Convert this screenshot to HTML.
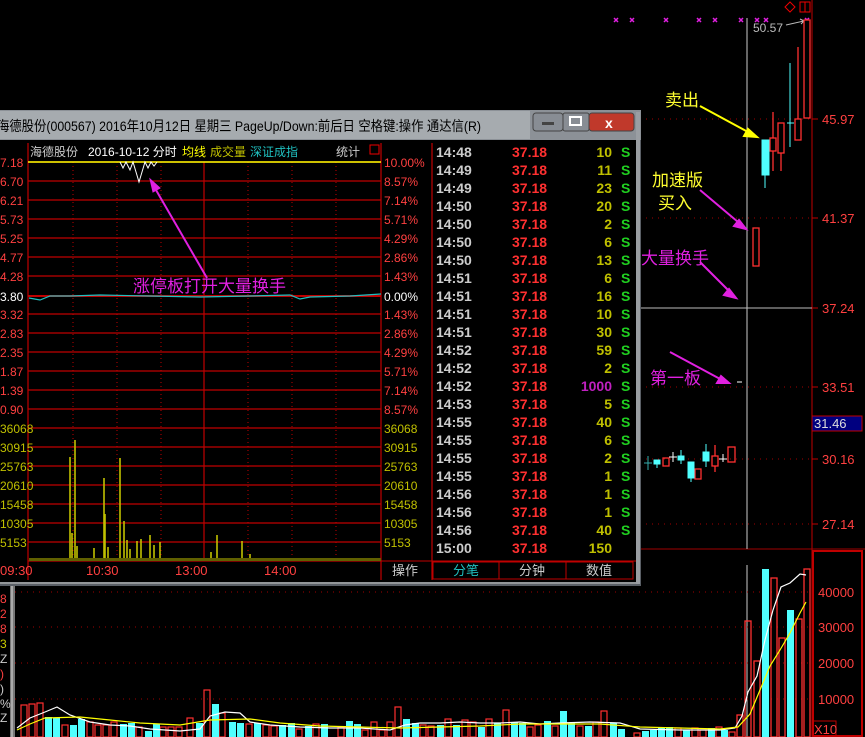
<!DOCTYPE html>
<html><head><meta charset="utf-8"><style>
html,body{margin:0;padding:0;background:#000;overflow:hidden}
svg{display:block}
text{font-family:"Liberation Sans","Noto Sans CJK SC",sans-serif}
</style></head><body>
<svg width="865" height="737" viewBox="0 0 865 737" xmlns="http://www.w3.org/2000/svg">
<rect width="865" height="737" fill="#000"/>
<line x1="812" y1="0" x2="812" y2="737" stroke="#c00000" stroke-width="1"/>
<line x1="0" y1="549" x2="865" y2="549" stroke="#a00000" stroke-width="1"/>
<line x1="747" y1="18" x2="747" y2="549" stroke="#ccc"/>
<line x1="747" y1="565" x2="747" y2="737" stroke="#ccc"/>
<g stroke="#a00000" stroke-dasharray="1,5">
<line x1="40" y1="119" x2="812" y2="119"/><line x1="40" y1="218" x2="812" y2="218"/>
<line x1="40" y1="387" x2="812" y2="387"/><line x1="40" y1="459" x2="812" y2="459"/>
<line x1="40" y1="524" x2="812" y2="524"/>
<line x1="15" y1="592" x2="812" y2="592"/><line x1="15" y1="627" x2="812" y2="627"/>
<line x1="15" y1="663" x2="812" y2="663"/><line x1="15" y1="699" x2="812" y2="699"/>
</g>
<line x1="640" y1="308" x2="812" y2="308" stroke="#bbb"/>
<g stroke="#c00000"><line x1="812" y1="119" x2="818" y2="119"/><line x1="812" y1="218" x2="818" y2="218"/><line x1="812" y1="308" x2="818" y2="308"/><line x1="812" y1="387" x2="818" y2="387"/><line x1="812" y1="459" x2="818" y2="459"/><line x1="812" y1="524" x2="818" y2="524"/></g>
<g fill="#ff4040" font-size="13">
<text x="822" y="124">45.97</text><text x="822" y="223">41.37</text><text x="822" y="313">37.24</text>
<text x="822" y="392">33.51</text><text x="822" y="464">30.16</text><text x="822" y="529">27.14</text>
<text x="818" y="597">40000</text><text x="818" y="632">30000</text><text x="818" y="668">20000</text><text x="818" y="704">10000</text>
</g>
<rect x="812" y="416" width="50" height="15" fill="#000080" stroke="#c00000"/>
<text x="814" y="428" fill="#ddd" font-size="13">31.46</text>
<rect x="813" y="551" width="49" height="185" fill="none" stroke="#c00000" stroke-width="2"/>
<rect x="813" y="721" width="23" height="16" fill="none" stroke="#c00000"/>
<text x="814" y="734" fill="#ff4040" font-size="13">X10</text>
<path d="M790 2 l5 5 -5 5 -5 -5z" fill="none" stroke="#e00"/><rect x="800" y="2" width="10" height="10" fill="none" stroke="#e00"/><line x1="805" y1="2" x2="805" y2="12" stroke="#e00"/>
<g stroke="#e020e0" stroke-width="1.5">
<path d="M614 18 l4 4 m0 -4 l-4 4"/><path d="M630 18 l4 4 m0 -4 l-4 4"/><path d="M664 18 l4 4 m0 -4 l-4 4"/><path d="M697 18 l4 4 m0 -4 l-4 4"/><path d="M713 18 l4 4 m0 -4 l-4 4"/><path d="M739 18 l4 4 m0 -4 l-4 4"/><path d="M755 18 l4 4 m0 -4 l-4 4"/><path d="M764 18 l4 4 m0 -4 l-4 4"/><path d="M805 18 l4 4 m0 -4 l-4 4"/>
</g>
<text x="753" y="32" fill="#bbb" font-size="12">50.57</text>
<path d="M786 25 l18 -4 l-4 -2 m4 2 l-3 3" stroke="#bbb" fill="none"/>
<g stroke="#ff3030" fill="none" stroke-width="1.3">
<line x1="773" y1="112" x2="773" y2="171"/><rect x="770" y="138" width="6" height="13" fill="#000"/>
<line x1="781" y1="123" x2="781" y2="171"/><rect x="778" y="123" width="6" height="30" fill="#000"/>
<line x1="798" y1="47" x2="798" y2="140"/><rect x="795" y="119" width="6" height="21" fill="#000"/>
<rect x="804" y="20" width="6" height="98" fill="#000"/>
<rect x="753" y="228" width="6" height="38"/>
<rect x="663" y="458" width="6" height="8"/>
<rect x="695" y="469" width="6" height="10"/>
<line x1="715" y1="445" x2="715" y2="472"/><rect x="712" y="456" width="6" height="10" fill="#000"/>
<rect x="728" y="447" width="7" height="15"/>
</g>
<g fill="#50ffff" stroke="#50ffff">
<line x1="765" y1="175" x2="765" y2="188"/><rect x="762" y="140" width="7" height="35"/>
<line x1="790" y1="63" x2="790" y2="147"/><line x1="787" y1="123" x2="794" y2="123"/>
<line x1="648" y1="456" x2="648" y2="470" stroke="#3aa"/><line x1="644" y1="463" x2="652" y2="463" stroke="#3aa"/>
<rect x="654" y="460" width="6" height="4"/><line x1="657" y1="464" x2="657" y2="468"/>
<line x1="681" y1="450" x2="681" y2="464"/><rect x="678" y="456" width="6" height="4"/>
<line x1="691" y1="478" x2="691" y2="482"/><rect x="688" y="462" width="6" height="16"/>
<line x1="706" y1="444" x2="706" y2="467"/><rect x="703" y="452" width="6" height="9"/>
</g>
<g stroke="#fff"><line x1="673" y1="452" x2="673" y2="462"/><line x1="669" y1="457" x2="677" y2="457"/><line x1="723" y1="454" x2="723" y2="462"/><line x1="719" y1="459" x2="727" y2="459"/><line x1="737" y1="382" x2="742" y2="382"/></g>
<g font-size="17"><text x="665" y="106" fill="#ffff30">卖出</text><text x="652" y="186" fill="#ffff30">加速版</text><text x="658" y="209" fill="#ffff30">买入</text><text x="641" y="264" fill="#e020e0">大量换手</text><text x="650" y="384" fill="#e020e0">第一板</text></g>
<g stroke-width="2"><line x1="700" y1="106" x2="748" y2="132" stroke="#ffff00"/><path d="M757 137 l-13 -1 4 -7z" fill="#ff0" stroke="#ff0"/>
<line x1="700" y1="190" x2="738" y2="222" stroke="#e020e0"/><path d="M746 229 l-12 -3 5 -6z" fill="#e020e0" stroke="#e020e0"/>
<line x1="700" y1="262" x2="730" y2="292" stroke="#e020e0"/><path d="M736 298 l-12 -3 5 -6z" fill="#e020e0" stroke="#e020e0"/>
<line x1="670" y1="352" x2="722" y2="380" stroke="#e020e0"/><path d="M729 383 l-12 0 4 -7z" fill="#e020e0" stroke="#e020e0"/></g>
<g fill="none" stroke="#ff3030" stroke-width="1.3">
<rect x="745" y="621" width="6" height="116"/><rect x="754" y="661" width="6" height="76"/><rect x="771" y="578" width="6" height="159"/><rect x="779" y="638" width="6" height="99"/><rect x="796" y="619" width="6" height="118"/><rect x="804" y="569" width="6" height="168"/><rect x="737" y="715" width="6" height="22"/>
</g>
<g fill="#50ffff"><rect x="762" y="569" width="7" height="168"/><rect x="787" y="610" width="7" height="127"/></g>
<g fill="none" stroke="#ff3030" stroke-width="1.2">
<rect x="21" y="705" width="6" height="32"/><rect x="29" y="704" width="6" height="33"/><rect x="37" y="703" width="6" height="34"/>
<rect x="62" y="725" width="6" height="12"/><rect x="87" y="722" width="6" height="15"/><rect x="95" y="725" width="6" height="12"/><rect x="103" y="725" width="6" height="12"/><rect x="111" y="722" width="6" height="15"/>
<rect x="136" y="727" width="6" height="10"/><rect x="160" y="727" width="6" height="10"/><rect x="168" y="727" width="6" height="10"/><rect x="176" y="727" width="6" height="10"/>
<rect x="187" y="718" width="6" height="19"/><rect x="204" y="690" width="6" height="47"/><rect x="219" y="713" width="6" height="24"/><rect x="246" y="724" width="6" height="13"/>
<rect x="263" y="725" width="6" height="12"/><rect x="271" y="726" width="6" height="11"/><rect x="296" y="729" width="6" height="8"/><rect x="313" y="724" width="6" height="13"/>
<rect x="338" y="727" width="6" height="10"/><rect x="362" y="730" width="6" height="7"/><rect x="371" y="722" width="6" height="15"/><rect x="379" y="730" width="6" height="7"/>
<rect x="387" y="722" width="6" height="15"/><rect x="395" y="707" width="6" height="30"/><rect x="420" y="725" width="6" height="12"/><rect x="428" y="726" width="6" height="11"/>
<rect x="445" y="719" width="6" height="18"/><rect x="462" y="720" width="6" height="17"/><rect x="470" y="722" width="6" height="15"/><rect x="486" y="719" width="6" height="18"/>
<rect x="503" y="710" width="6" height="27"/><rect x="527" y="727" width="6" height="10"/><rect x="535" y="725" width="6" height="12"/><rect x="552" y="726" width="6" height="11"/>
<rect x="577" y="726" width="6" height="11"/><rect x="593" y="722" width="6" height="15"/><rect x="601" y="711" width="6" height="26"/><rect x="634" y="733" width="6" height="4"/>
<rect x="675" y="728" width="6" height="9"/><rect x="692" y="728" width="6" height="9"/><rect x="700" y="730" width="6" height="7"/><rect x="716" y="727" width="6" height="10"/><rect x="729" y="732" width="6" height="5"/>
</g>
<g fill="#50ffff">
<rect x="45" y="717" width="7" height="20"/><rect x="53" y="718" width="7" height="19"/><rect x="70" y="725" width="7" height="12"/><rect x="78" y="719" width="7" height="18"/>
<rect x="120" y="724" width="7" height="13"/><rect x="128" y="723" width="7" height="14"/><rect x="145" y="731" width="7" height="6"/><rect x="153" y="724" width="7" height="13"/>
<rect x="196" y="723" width="7" height="14"/><rect x="212" y="704" width="7" height="33"/><rect x="229" y="722" width="7" height="15"/><rect x="237" y="723" width="7" height="14"/>
<rect x="254" y="723" width="7" height="14"/><rect x="279" y="725" width="7" height="12"/><rect x="288" y="723" width="7" height="14"/><rect x="305" y="726" width="7" height="11"/>
<rect x="321" y="724" width="7" height="13"/><rect x="346" y="721" width="7" height="16"/><rect x="354" y="724" width="7" height="13"/><rect x="403" y="719" width="7" height="18"/>
<rect x="412" y="723" width="7" height="14"/><rect x="437" y="725" width="7" height="12"/><rect x="453" y="725" width="7" height="12"/><rect x="478" y="727" width="7" height="10"/>
<rect x="494" y="723" width="7" height="14"/><rect x="511" y="722" width="7" height="15"/><rect x="519" y="723" width="7" height="14"/><rect x="544" y="721" width="7" height="16"/>
<rect x="560" y="711" width="7" height="26"/><rect x="568" y="723" width="7" height="14"/><rect x="585" y="726" width="7" height="11"/><rect x="610" y="723" width="7" height="14"/>
<rect x="618" y="729" width="7" height="8"/><rect x="642" y="731" width="7" height="6"/><rect x="650" y="730" width="7" height="7"/><rect x="658" y="727" width="7" height="10"/>
<rect x="666" y="727" width="7" height="10"/><rect x="683" y="730" width="7" height="7"/><rect x="708" y="728" width="7" height="9"/><rect x="721" y="730" width="7" height="7"/>
</g>
<polyline fill="none" stroke="#fff" stroke-width="1.2" points="17,728 30,718 45,712 57,707 70,715 90,722 110,725 130,726 150,729 180,731 200,729 210,716 225,712 240,713 250,722 270,725 300,727 330,728 360,728 390,730 405,725 420,723 440,723 460,722 480,723 500,723 520,722 540,724 560,723 590,722 620,723 640,729 680,730 720,730 735,728 742,716 748,692 757,676 765,640 773,610 781,587 790,583 800,574 806,575"/>
<polyline fill="none" stroke="#ffff00" stroke-width="1.2" points="17,730 30,724 45,718 80,717 110,720 140,723 180,725 210,720 250,719 280,723 320,726 360,727 400,728 440,727 480,726 520,724 560,724 600,724 640,727 680,728 720,729 738,727 750,714 760,690 770,666 780,650 790,633 800,613 806,602"/>
<rect x="0" y="586" width="15" height="151" fill="#000"/>
<rect x="10" y="586" width="5" height="151" fill="#777"/><line x1="12" y1="586" x2="12" y2="737" stroke="#ddd"/>
<g font-size="12"><text x="0" y="603" fill="#ff4040">8</text><text x="0" y="618" fill="#ff4040">2</text><text x="0" y="633" fill="#ff4040">8</text><text x="0" y="648" fill="#cccc00">3</text><text x="0" y="663" fill="#ccc">Z</text><text x="0" y="678" fill="#ff4040">)</text><text x="0" y="693" fill="#ccc">)</text><text x="0" y="708" fill="#ccc">%</text><text x="0" y="722" fill="#ccc">Z</text></g>

<rect x="0" y="110" width="641" height="476" fill="#5a5f66"/>
<rect x="0" y="110" width="641" height="30" fill="#8c9197"/>
<rect x="0" y="111" width="530" height="28" fill="#b8bcc0" opacity="0.6"/>
<text x="-3" y="131" fill="#000" font-size="14" textLength="484" lengthAdjust="spacingAndGlyphs">海德股份(000567) 2016年10月12日 星期三 PageUp/Down:前后日 空格键:操作 通达信(R)</text>
<rect x="533" y="113" width="30" height="18" rx="3" fill="#888d94" stroke="#444"/><rect x="542" y="122" width="12" height="3" fill="#444"/>
<rect x="563" y="113" width="26" height="18" rx="2" fill="#888d94" stroke="#444"/><rect x="570" y="117" width="11" height="8" fill="none" stroke="#fff" stroke-width="2"/>
<rect x="589" y="113" width="45" height="18" rx="3" fill="#c0392b" stroke="#444"/><text x="605" y="128" fill="#fff" font-size="14" font-weight="bold">x</text>
<rect x="0" y="140" width="636" height="442" fill="#000"/>
<line x1="0" y1="583" x2="640" y2="583" stroke="#ccc"/>
<g stroke="#c00000" stroke-width="1.2">
<line x1="28" y1="162" x2="381" y2="162"/><line x1="28" y1="181" x2="381" y2="181"/><line x1="28" y1="200" x2="381" y2="200"/><line x1="28" y1="219" x2="381" y2="219"/><line x1="28" y1="238" x2="381" y2="238"/><line x1="28" y1="257" x2="381" y2="257"/><line x1="28" y1="276" x2="381" y2="276"/>
<line x1="28" y1="314" x2="381" y2="314"/><line x1="28" y1="333" x2="381" y2="333"/><line x1="28" y1="352" x2="381" y2="352"/><line x1="28" y1="371" x2="381" y2="371"/><line x1="28" y1="390" x2="381" y2="390"/><line x1="28" y1="409" x2="381" y2="409"/>
<line x1="28" y1="428" x2="381" y2="428"/><line x1="28" y1="447" x2="381" y2="447"/><line x1="28" y1="466" x2="381" y2="466"/><line x1="28" y1="485" x2="381" y2="485"/><line x1="28" y1="504" x2="381" y2="504"/><line x1="28" y1="523" x2="381" y2="523"/><line x1="28" y1="542" x2="381" y2="542"/>
<line x1="28" y1="296" x2="381" y2="296" stroke-width="2"/><line x1="28" y1="561" x2="381" y2="561"/>
<line x1="28" y1="143" x2="28" y2="580"/><line x1="204" y1="162" x2="204" y2="561"/><line x1="381" y1="143" x2="381" y2="580"/>
<line x1="432" y1="143" x2="432" y2="580"/>
</g>
<g stroke="#c00000" stroke-dasharray="1,3"><line x1="73" y1="162" x2="73" y2="561"/><line x1="117" y1="162" x2="117" y2="561"/><line x1="161" y1="162" x2="161" y2="561"/><line x1="248" y1="162" x2="248" y2="561"/><line x1="292" y1="162" x2="292" y2="561"/><line x1="336" y1="162" x2="336" y2="561"/></g>
<line x1="28" y1="162" x2="381" y2="162" stroke="#ffff00" stroke-width="1.5"/>
<polyline fill="none" stroke="#fff" points="120,162 123,168 126,162 130,170 133,162 136,172 139,182 142,172 145,162 148,168 151,162 154,166 157,162"/>
<polyline fill="none" stroke="#20c0c0" stroke-width="1.2" points="29,298 40,300 50,296 70,296 100,295 150,296 200,297 250,296 290,295 300,299 310,297 350,296 381,294"/>
<g stroke="#c0c000" stroke-width="1.6"><line x1="70" y1="561" x2="70" y2="457"/><line x1="72" y1="561" x2="72" y2="533"/><line x1="75" y1="561" x2="75" y2="440"/><line x1="77" y1="561" x2="77" y2="546"/><line x1="104" y1="561" x2="104" y2="478"/><line x1="105" y1="561" x2="105" y2="514"/><line x1="108" y1="561" x2="108" y2="547"/><line x1="120" y1="561" x2="120" y2="458"/><line x1="124" y1="561" x2="124" y2="521"/><line x1="127" y1="561" x2="127" y2="540"/><line x1="130" y1="561" x2="130" y2="549"/><line x1="137" y1="561" x2="137" y2="541"/><line x1="141" y1="561" x2="141" y2="539"/><line x1="150" y1="561" x2="150" y2="535"/><line x1="154" y1="561" x2="154" y2="545"/><line x1="160" y1="561" x2="160" y2="542"/><line x1="94" y1="561" x2="94" y2="548"/><line x1="217" y1="561" x2="217" y2="535"/><line x1="242" y1="561" x2="242" y2="541"/><line x1="250" y1="561" x2="250" y2="554"/><line x1="211" y1="561" x2="211" y2="552"/></g>
<rect x="29" y="558" width="352" height="3" fill="#606000"/>
<g font-size="12" fill="#ff4040"><text x="0" y="167">7.18</text><text x="0" y="186">6.70</text><text x="0" y="205">6.21</text><text x="0" y="224">5.73</text><text x="0" y="243">5.25</text><text x="0" y="262">4.77</text><text x="0" y="281">4.28</text>
<text x="0" y="319">3.32</text><text x="0" y="338">2.83</text><text x="0" y="357">2.35</text><text x="0" y="376">1.87</text><text x="0" y="395">1.39</text><text x="0" y="414">0.90</text>
<text x="384" y="167">10.00%</text><text x="384" y="186">8.57%</text><text x="384" y="205">7.14%</text><text x="384" y="224">5.71%</text><text x="384" y="243">4.29%</text><text x="384" y="262">2.86%</text><text x="384" y="281">1.43%</text>
<text x="384" y="319">1.43%</text><text x="384" y="338">2.86%</text><text x="384" y="357">4.29%</text><text x="384" y="376">5.71%</text><text x="384" y="395">7.14%</text><text x="384" y="414">8.57%</text></g>
<g font-size="13" fill="#ff4040"><text x="0" y="575">09:30</text><text x="86" y="575">10:30</text><text x="175" y="575">13:00</text><text x="264" y="575">14:00</text></g>
<g font-size="12" fill="#fff"><text x="0" y="301">3.80</text><text x="384" y="301">0.00%</text></g>
<g font-size="12" fill="#c0c000"><text x="0" y="433">36068</text><text x="0" y="452">30915</text><text x="0" y="471">25763</text><text x="0" y="490">20610</text><text x="0" y="509">15458</text><text x="0" y="528">10305</text><text x="0" y="547">5153</text>
<text x="384" y="433">36068</text><text x="384" y="452">30915</text><text x="384" y="471">25763</text><text x="384" y="490">20610</text><text x="384" y="509">15458</text><text x="384" y="528">10305</text><text x="384" y="547">5153</text></g>
<g font-size="12"><text x="30" y="156" fill="#ccc">海德股份</text><text x="88" y="156" fill="#fff">2016-10-12 分时</text><text x="182" y="156" fill="#ffff00">均线</text><text x="210" y="156" fill="#c0c000">成交量</text><text x="250" y="156" fill="#20c0c0">深证成指</text><text x="336" y="156" fill="#ccc">统计</text></g>
<rect x="370" y="145" width="9" height="9" fill="none" stroke="#e00"/>
<text x="133" y="292" fill="#e020e0" font-size="17">涨停板打开大量换手</text>
<line x1="207" y1="278" x2="156" y2="190" stroke="#e020e0" stroke-width="2"/><path d="M150 179 l10 9 -7 4z" fill="#e020e0" stroke="#e020e0"/>
<line x1="381" y1="561" x2="636" y2="561" stroke="#c00000"/>
<text x="392" y="575" fill="#ccc" font-size="13">操作</text>
<rect x="433" y="562" width="200" height="17" fill="none" stroke="#c00000"/>
<line x1="499" y1="562" x2="499" y2="579" stroke="#c00000"/><line x1="566" y1="562" x2="566" y2="579" stroke="#c00000"/>
<text x="453" y="575" fill="#20c0c0" font-size="13">分笔</text><text x="519" y="575" fill="#ccc" font-size="13">分钟</text><text x="586" y="575" fill="#ccc" font-size="13">数值</text>
<g font-size="14" font-weight="bold">
<g fill="#ccc"><text x="436" y="157">14:48</text><text x="436" y="175">14:49</text><text x="436" y="193">14:49</text><text x="436" y="211">14:50</text><text x="436" y="229">14:50</text><text x="436" y="247">14:50</text><text x="436" y="265">14:50</text><text x="436" y="283">14:51</text><text x="436" y="301">14:51</text><text x="436" y="319">14:51</text><text x="436" y="337">14:51</text><text x="436" y="355">14:52</text><text x="436" y="373">14:52</text><text x="436" y="391">14:52</text><text x="436" y="409">14:53</text><text x="436" y="427">14:55</text><text x="436" y="445">14:55</text><text x="436" y="463">14:55</text><text x="436" y="481">14:55</text><text x="436" y="499">14:56</text><text x="436" y="517">14:56</text><text x="436" y="535">14:56</text><text x="436" y="553">15:00</text></g>
<g fill="#ff3030"><text x="512" y="157">37.18</text><text x="512" y="175">37.18</text><text x="512" y="193">37.18</text><text x="512" y="211">37.18</text><text x="512" y="229">37.18</text><text x="512" y="247">37.18</text><text x="512" y="265">37.18</text><text x="512" y="283">37.18</text><text x="512" y="301">37.18</text><text x="512" y="319">37.18</text><text x="512" y="337">37.18</text><text x="512" y="355">37.18</text><text x="512" y="373">37.18</text><text x="512" y="391">37.18</text><text x="512" y="409">37.18</text><text x="512" y="427">37.18</text><text x="512" y="445">37.18</text><text x="512" y="463">37.18</text><text x="512" y="481">37.18</text><text x="512" y="499">37.18</text><text x="512" y="517">37.18</text><text x="512" y="535">37.18</text><text x="512" y="553">37.18</text></g>
<g fill="#c0c000" text-anchor="end"><text x="612" y="157">10</text><text x="612" y="175">11</text><text x="612" y="193">23</text><text x="612" y="211">20</text><text x="612" y="229">2</text><text x="612" y="247">6</text><text x="612" y="265">13</text><text x="612" y="283">6</text><text x="612" y="301">16</text><text x="612" y="319">10</text><text x="612" y="337">30</text><text x="612" y="355">59</text><text x="612" y="373">2</text><text x="612" y="391" fill="#c020c0">1000</text><text x="612" y="409">5</text><text x="612" y="427">40</text><text x="612" y="445">6</text><text x="612" y="463">2</text><text x="612" y="481">1</text><text x="612" y="499">1</text><text x="612" y="517">1</text><text x="612" y="535">40</text><text x="612" y="553">150</text></g>
<g fill="#20d020"><text x="621" y="157">S</text><text x="621" y="175">S</text><text x="621" y="193">S</text><text x="621" y="211">S</text><text x="621" y="229">S</text><text x="621" y="247">S</text><text x="621" y="265">S</text><text x="621" y="283">S</text><text x="621" y="301">S</text><text x="621" y="319">S</text><text x="621" y="337">S</text><text x="621" y="355">S</text><text x="621" y="373">S</text><text x="621" y="391">S</text><text x="621" y="409">S</text><text x="621" y="427">S</text><text x="621" y="445">S</text><text x="621" y="463">S</text><text x="621" y="481">S</text><text x="621" y="499">S</text><text x="621" y="517">S</text><text x="621" y="535">S</text></g>
</g>
<rect x="636" y="112" width="4" height="472" fill="#9a9ea3"/>
</svg>
</body></html>
